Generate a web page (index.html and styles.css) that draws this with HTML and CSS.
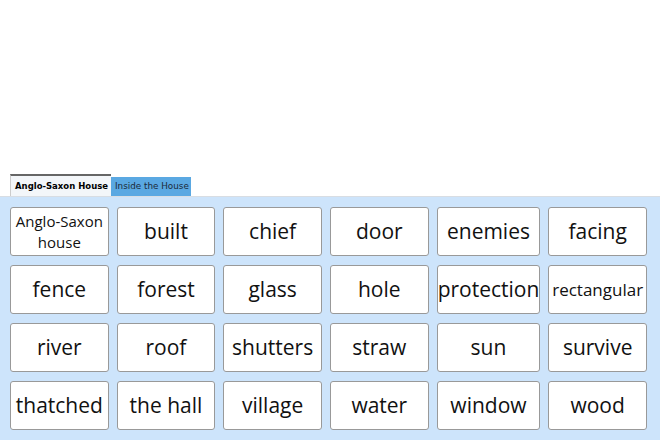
FILE: index.html
```html
<!DOCTYPE html>
<html lang="en">

<head>
    <meta charset="UTF-8">
    <meta name="viewport" content="width=device-width, initial-scale=1.0">
    <title>Anglo-Saxon House Word Mat</title>
    <link rel="stylesheet" href="styles.css">
</head>

<body>
    <div class="blank"></div>
    <div class="tabs">
        <div class="tab active">Anglo-Saxon House</div>
        <div class="tab">Inside the House</div>
    </div>
    <div class="panel">
        <div class="card small">Anglo-Saxon house</div>
        <div class="card">built</div>
        <div class="card">chief</div>
        <div class="card">door</div>
        <div class="card">enemies</div>
        <div class="card">facing</div>
        <div class="card">fence</div>
        <div class="card">forest</div>
        <div class="card">glass</div>
        <div class="card">hole</div>
        <div class="card">protection</div>
        <div class="card tight">rectangular</div>
        <div class="card">river</div>
        <div class="card">roof</div>
        <div class="card">shutters</div>
        <div class="card">straw</div>
        <div class="card">sun</div>
        <div class="card">survive</div>
        <div class="card">thatched</div>
        <div class="card">the hall</div>
        <div class="card">village</div>
        <div class="card">water</div>
        <div class="card">window</div>
        <div class="card">wood</div>
    </div>
</body>

</html>
```

FILE: styles.css
```css
* {
    box-sizing: border-box;
}

body {
    margin: 0;
    font-family: "Open Sans", sans-serif;
    background-color: #fff;
    color: #111;
    height: 440px;
    overflow: hidden;
}

.blank {
    height: 174px;
}

.tabs {
    display: flex;
    align-items: flex-end;
    padding-left: 10px;
    height: 22px;
}

.tab {
    font-family: "DejaVu Sans", sans-serif;
    font-size: 8.8px;
    width: 80px;
    height: 19px;
    line-height: 19px;
    padding: 0 4px;
    background-color: #5aa8e2;
    color: #1a2a3a;
    white-space: nowrap;
}

.tab.active {
    font-weight: bold;
    font-size: 8.5px;
    width: 101px;
    height: 22px;
    line-height: 20px;
    background-color: #f3f6f9;
    color: #000;
    border-top: 2px solid #666;
    border-left: 1px solid #ccc;
    padding: 0 4px;
}

.panel {
    background-color: #cde4fb;
    border-top: 1px solid #d8dde3;
    padding: 10px 13px 10px 10px;
    display: grid;
    grid-template-columns: repeat(6, 1fr);
    grid-auto-rows: 49px;
    column-gap: 8px;
    row-gap: 9px;
    height: 244px;
}

.card {
    background-color: #fff;
    border: 1px solid #999;
    border-radius: 3px;
    display: flex;
    align-items: center;
    justify-content: center;
    text-align: center;
    font-size: 21px;
    line-height: 1;
}

.card.small {
    font-size: 15px;
    line-height: 1.4;
}

.card.tight {
    font-size: 17px;
}
```
